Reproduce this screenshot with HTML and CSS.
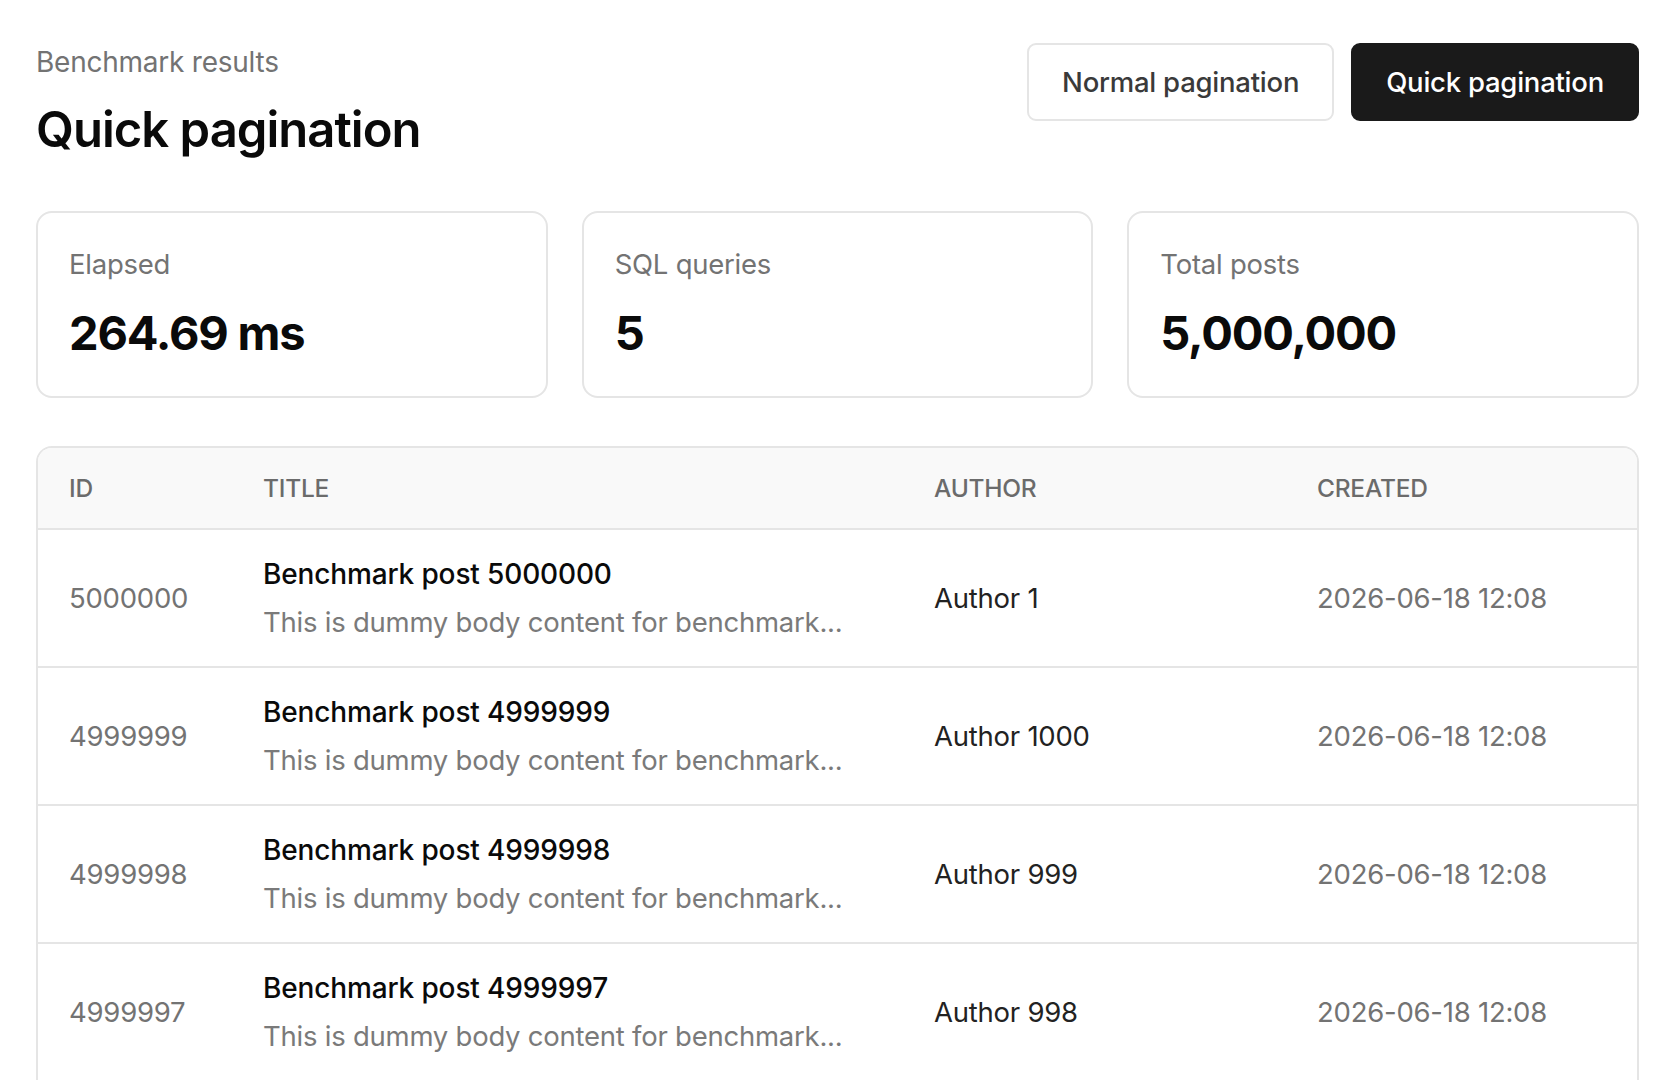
FILE: index.html
```html
<!DOCTYPE html>
<html lang="en">
<head>
<meta charset="utf-8">
<title>Quick pagination</title>
<link rel="stylesheet" href="styles.css">
</head>
<body>
<main class="page">
  <header class="top">
    <div class="titles">
      <div class="eyebrow">Benchmark results</div>
      <h1 class="title">Quick pagination</h1>
    </div>
    <nav class="modes">
      <a class="btn btn-outline" href="#">Normal pagination</a>
      <a class="btn btn-solid" href="#">Quick pagination</a>
    </nav>
  </header>

  <section class="stats">
    <div class="card">
      <div class="card-label">Elapsed</div>
      <div class="card-value">264.69 ms</div>
    </div>
    <div class="card">
      <div class="card-label">SQL queries</div>
      <div class="card-value">5</div>
    </div>
    <div class="card">
      <div class="card-label">Total posts</div>
      <div class="card-value">5,000,000</div>
    </div>
  </section>

  <section class="table">
    <div class="row head">
      <div class="c-id">ID</div>
      <div class="c-title">TITLE</div>
      <div class="c-author">AUTHOR</div>
      <div class="c-created">CREATED</div>
    </div>
    <div class="row">
      <div class="c-id muted">5000000</div>
      <div class="c-title"><div class="post-title">Benchmark post 5000000</div><div class="post-body">This is dummy body content for benchmark...</div></div>
      <div class="c-author">Author 1</div>
      <div class="c-created muted">2026-06-18 12:08</div>
    </div>
    <div class="row">
      <div class="c-id muted">4999999</div>
      <div class="c-title"><div class="post-title">Benchmark post 4999999</div><div class="post-body">This is dummy body content for benchmark...</div></div>
      <div class="c-author">Author 1000</div>
      <div class="c-created muted">2026-06-18 12:08</div>
    </div>
    <div class="row">
      <div class="c-id muted">4999998</div>
      <div class="c-title"><div class="post-title">Benchmark post 4999998</div><div class="post-body">This is dummy body content for benchmark...</div></div>
      <div class="c-author">Author 999</div>
      <div class="c-created muted">2026-06-18 12:08</div>
    </div>
    <div class="row">
      <div class="c-id muted">4999997</div>
      <div class="c-title"><div class="post-title">Benchmark post 4999997</div><div class="post-body">This is dummy body content for benchmark...</div></div>
      <div class="c-author">Author 998</div>
      <div class="c-created muted">2026-06-18 12:08</div>
    </div>
  </section>
</main>
</body>
</html>
```
FILE: styles.css
```css
* { box-sizing: border-box; }
html, body { margin: 0; padding: 0; background: #ffffff; }
body {
  font-family: Inter, "Noto Sans", "Liberation Sans", sans-serif;
  color: #111111;
  letter-spacing: -0.015em;
}
.page {
  padding: 43px 33px 0 36px;
}
.top {
  display: flex;
  justify-content: space-between;
  align-items: flex-start;
}
.eyebrow {
  font-size: 28px;
  line-height: 39px;
  color: #737373;
}
.title {
  margin: 19px 0 0;
  font-size: 49px;
  line-height: 58px;
  font-weight: 600;
  letter-spacing: -0.02em;
  color: #0a0a0a;
}
.modes {
  display: flex;
  gap: 17px;
}
.btn {
  display: flex;
  align-items: center;
  justify-content: center;
  height: 78px;
  padding: 0 33px;
  border-radius: 9px;
  font-size: 27.5px;
  font-weight: 500;
  text-decoration: none;
}
.btn-outline {
  border: 2px solid #e5e5e5;
  color: #3a3a3a;
  background: #fff;
}
.btn-solid {
  background: #1a1a1a;
  color: #ffffff;
  border: 2px solid #1a1a1a;
}
.stats {
  margin-top: 52px;
  display: grid;
  grid-template-columns: repeat(3, 1fr);
  gap: 34px;
}
.card {
  border: 2px solid #e5e5e5;
  border-radius: 16px;
  height: 187px;
  padding: 32px 31px 0;
}
.card-label {
  font-size: 27.5px;
  line-height: 39px;
  color: #737373;
}
.card-value {
  margin-top: 21px;
  font-size: 47px;
  line-height: 55px;
  font-weight: 700;
  color: #0a0a0a;
  letter-spacing: -0.025em;
}
.table {
  margin-top: 48px;
  border: 2px solid #e5e5e5;
  border-bottom: 0;
  border-radius: 16px 16px 0 0;
  overflow: hidden;
}
.row {
  display: grid;
  grid-template-columns: 194px 671px 383px 1fr;
  align-items: center;
  padding: 0 31px;
  height: 138px;
  border-top: 2px solid #e5e5e5;
  font-size: 27.5px;
}
.row.head {
  border-top: 0;
  height: 80px;
  background: #f9f9f9;
  font-size: 24.5px;
  font-weight: 500;
  color: #6b6b6b;
}
.muted { color: #737373; }
.post-title {
  font-size: 28px;
  font-weight: 500;
  line-height: 37px;
  letter-spacing: -0.005em;
  color: #0a0a0a;
}
.post-body {
  margin-top: 11px;
  color: #7a7a7a;
  line-height: 37px;
}
.c-author { color: #222; }
.head .c-author { color: #6b6b6b; }
```
